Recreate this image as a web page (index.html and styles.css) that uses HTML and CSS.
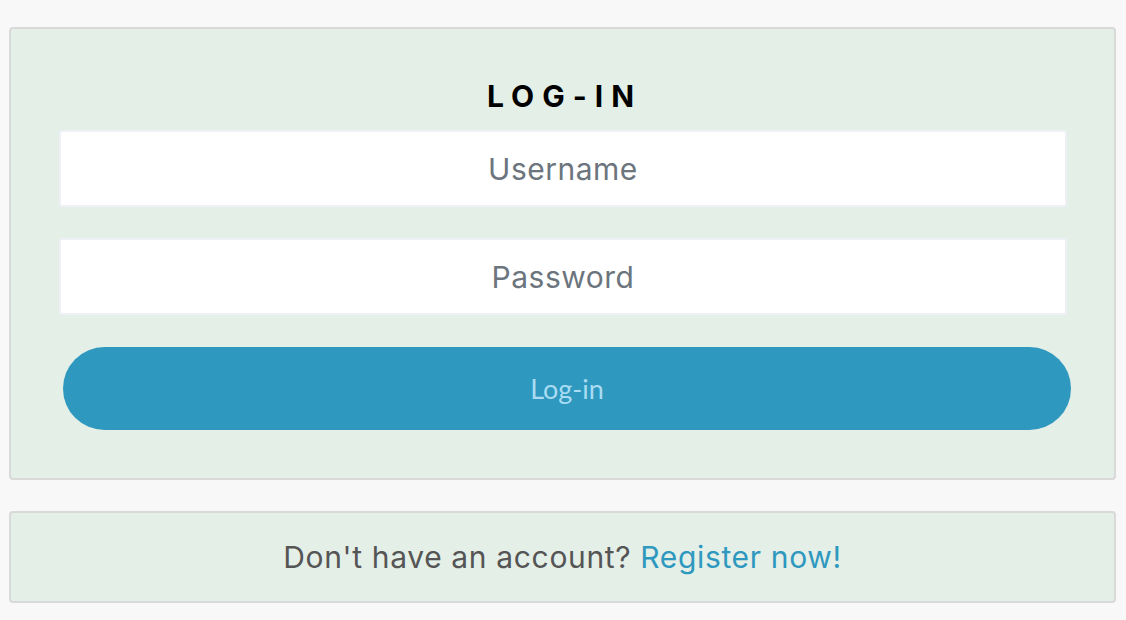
FILE: index.html
```html
<!DOCTYPE html>
<html lang="en">
<head>
<meta charset="utf-8">
<title>Log-in</title>
<link rel="stylesheet" href="styles.css">
</head>
<body>
<main class="page">
  <section class="card login">
    <h1 class="title">LOG-IN</h1>
    <form class="form">
      <input class="field" type="text" placeholder="Username">
      <input class="field" type="password" placeholder="Password">
      <button class="btn" type="button">Log-in</button>
    </form>
  </section>
  <section class="card register">
    <p class="reg-text">Don't have an account? <a class="reg-link" href="#">Register now!</a></p>
  </section>
</main>
</body>
</html>
```
FILE: styles.css
```css
* { box-sizing: border-box; }
html, body { margin: 0; padding: 0; }
body {
  background: #f8f8f8;
  font-family: Inter, "Open Sans", sans-serif;
}
.page {
  padding: 27px 10px 0 9px;
  display: flex;
  flex-direction: column;
  gap: 31px;
}
.card {
  background: #e4efe7;
  border: 2px solid #d9d9d9;
  border-radius: 4px;
}
.login {
  padding: 47px 47px 48px 48px;
}
.title {
  margin: 0 0 14px;
  text-align: center;
  font-size: 30px;
  line-height: 40px;
  font-weight: 700;
  letter-spacing: 8px;
  padding-left: 3px;
  color: #000;
}
.form {
  display: flex;
  flex-direction: column;
}
.field {
  display: block;
  width: 1008px;
  height: 77px;
  margin: 0 0 31px;
  border: 2px solid #eef0f6;
  border-radius: 3px;
  background: #fff;
  text-align: center;
  font-family: Inter, "Open Sans", sans-serif;
  font-size: 30px;
  letter-spacing: 0.5px;
  color: #333;
  outline: none;
}
.field + .field { margin-bottom: 32px; }
.field::placeholder { color: #6c757d; opacity: 1; }
.btn {
  display: block;
  width: 1008px;
  height: 83px;
  margin-left: 4px;
  border: none;
  border-radius: 42px;
  background: #2e98bf;
  color: #a9dcf2;
  font-family: Lato, "Open Sans", sans-serif;
  font-size: 27px;
  cursor: pointer;
}
.register {
  height: 92px;
  display: flex;
  align-items: center;
  justify-content: center;
}
.reg-text {
  margin: 0;
  font-size: 30px;
  letter-spacing: 0.65px;
  color: #555;
}
.reg-link {
  color: #2e98bf;
  text-decoration: none;
}
```
